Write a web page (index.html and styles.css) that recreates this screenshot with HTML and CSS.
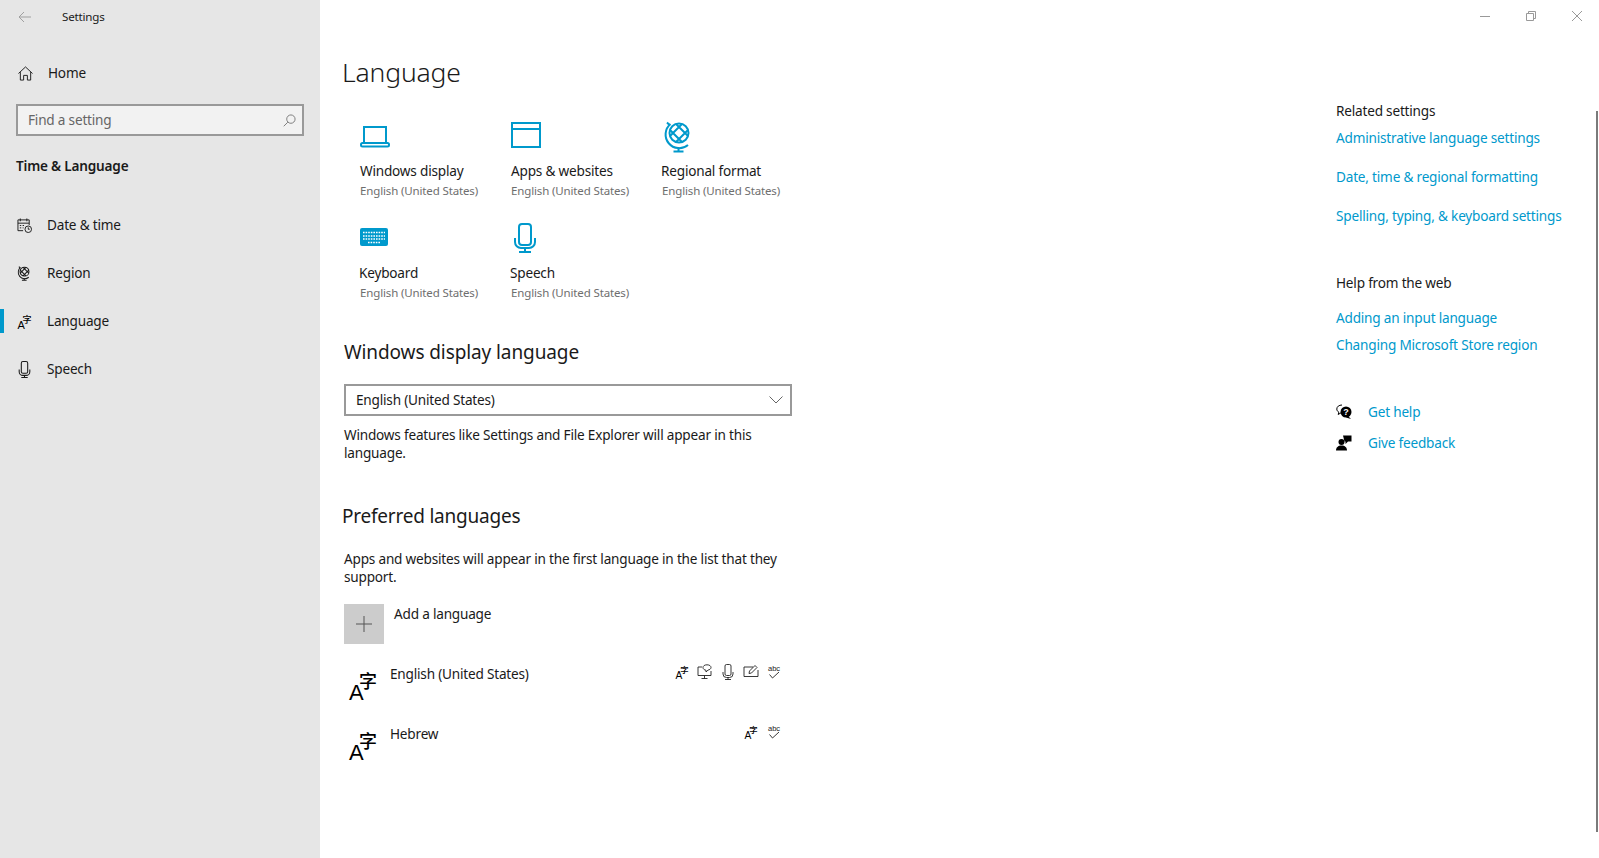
FILE: index.html
```html
<!DOCTYPE html>
<html lang="en">
<head>
<meta charset="utf-8">
<title>Settings</title>
<link rel="stylesheet" href="styles.css">
</head>
<body>
<svg class="sprite" width="0" height="0" aria-hidden="true">
  <defs>
    <symbol id="i-lang" viewBox="0 0 30 30">
      <text class="lang-a" x="1" y="30">A</text>
      <text class="lang-z" x="11" y="17.500">字</text>
    </symbol>
    <symbol id="i-mic" viewBox="0 0 16 16">
      <rect x="5" y="0.500" width="6" height="11" rx="1.500"/>
      <path d="M3 8v2a3.500 3.500 0 0 0 3.500 3.500h3a3.500 3.500 0 0 0 3.500-3.500V8M8 13.500V15.500M5 15.500h6"/>
    </symbol>
    <symbol id="i-abc" viewBox="0 0 16 16">
      <text class="abc" x="2" y="6.500">abc</text>
      <path d="M3.500 10.500l3 3.500 6.500-6"/>
    </symbol>
    <symbol id="i-globe" viewBox="0 0 30 32">
      <path d="M3 1.500L6 4.500M6.500 3A13 13 0 0 0 24 24"/>
      <circle cx="15" cy="12" r="9.500"/>
      <path d="M6 15L18 3M12 21L24 9M6 9L18 21M12 3L24 15"/>
      <path d="M14.500 26v4M9.500 30.500h10"/>
    </symbol>
  </defs>
</svg>

<nav class="sidebar">
  <div class="titlebar">
    <svg class="back" viewBox="0 0 14 12"><path d="M13 6H1M6 1L1 6l5 5"/></svg>
    <span class="app-name">Settings</span>
  </div>
  <a class="home">
    <svg class="nav-icon" viewBox="0 0 16 16"><path d="M0.500 8L8 1l7.500 7M2.500 6.500V15H6V10h4v5h3.500V6.500"/></svg>
    <span>Home</span>
  </a>
  <div class="search">
    <span>Find a setting</span>
    <svg class="search-icon" viewBox="0 0 14 14"><circle cx="8.500" cy="5.500" r="4.500"/><path d="M5.200 8.800L0.800 13.200"/></svg>
  </div>
  <div class="group">Time &amp; Language</div>
  <ul class="nav">
    <li>
      <svg class="nav-icon" viewBox="0 0 16 16"><path d="M6.500 13.500H1V2h12v5.500M1 5.500h12M3.500 0.500v3M10.500 0.500v3M3 8h1.500M6 8h1.500M3 10.500h1.500M6 10.500h1"/><circle cx="12" cy="12" r="3.500"/><path d="M12 10v2h1.500"/></svg>
      <span>Date &amp; time</span>
    </li>
    <li>
      <svg class="nav-icon nav-globe" viewBox="0 0 30 32"><use href="#i-globe"/></svg>
      <span>Region</span>
    </li>
    <li class="active">
      <svg class="nav-icon" viewBox="0 0 30 30"><use href="#i-lang"/></svg>
      <span>Language</span>
    </li>
    <li>
      <svg class="nav-icon nav-mic" viewBox="0 0 16 16"><use href="#i-mic"/></svg>
      <span>Speech</span>
    </li>
  </ul>
</nav>

<main class="content">
  <h1>Language</h1>
  <div class="cards">
    <div class="card">
      <div class="card-icon"><svg class="ic-laptop" viewBox="0 0 30 22"><path d="M4 16V1h22v15M1 18.500c0-1 .5-1.500 1.500-1.500h25c1 0 1.500.5 1.500 1.500v.5c0 1-.5 1.500-1.500 1.500h-25c-1 0-1.500-.5-1.500-1.500z"/></svg></div>
      <div class="card-title">Windows display</div>
      <div class="card-sub">English (United States)</div>
    </div>
    <div class="card">
      <div class="card-icon"><svg class="ic-apps" viewBox="0 0 30 26"><path d="M1 1h28v24H1zM1 7h28"/></svg></div>
      <div class="card-title">Apps &amp; websites</div>
      <div class="card-sub">English (United States)</div>
    </div>
    <div class="card">
      <div class="card-icon"><svg class="ic-globe" viewBox="0 0 30 32"><use href="#i-globe"/></svg></div>
      <div class="card-title nudge">Regional format</div>
      <div class="card-sub">English (United States)</div>
    </div>
    <div class="card">
      <div class="card-icon"><svg class="ic-keyboard" viewBox="0 0 28 18"><rect width="28" height="18" rx="2"/><path class="keys" d="M3 4.500h22M3 8h22M3 11h22M8 14.500h12"/></svg></div>
      <div class="card-title nudge">Keyboard</div>
      <div class="card-sub">English (United States)</div>
    </div>
    <div class="card">
      <div class="card-icon"><svg class="ic-mic" viewBox="0 0 22 30"><rect x="5" y="1" width="12" height="21" rx="3"/><path d="M1 15v4a6 6 0 0 0 6 6h8a6 6 0 0 0 6-6v-4M11 25v4M5 29h12"/></svg></div>
      <div class="card-title nudge">Speech</div>
      <div class="card-sub">English (United States)</div>
    </div>
  </div>

  <h2>Windows display language</h2>
  <div class="select">
    <span>English (United States)</span>
    <svg class="chevron" viewBox="0 0 14 8"><path d="M0.500 0.500L7 7l6.500-6.500"/></svg>
  </div>
  <p class="note">Windows features like Settings and File Explorer will appear in this language.</p>

  <h2 class="h2-pref">Preferred languages</h2>
  <p class="note note-pref">Apps and websites will appear in the first language in the list that they support.</p>

  <div class="add">
    <div class="add-btn"><svg viewBox="0 0 16 16"><path d="M8 0v16M0 8h16"/></svg></div>
    <span>Add a language</span>
  </div>

  <div class="lang-row">
    <svg class="lang-icon" viewBox="0 0 30 30"><use href="#i-lang"/></svg>
    <span class="lang-name">English (United States)</span>
    <div class="caps">
      <svg class="cap-lang" viewBox="0 0 30 30"><use href="#i-lang"/></svg>
      <svg viewBox="0 0 16 16"><path d="M5 3H1v8.500h13V7M4.500 14.500h6M7.500 11.500v3"/><path d="M10 0.800c-2.500 0-4 1.200-4 2.700s1.500 2.700 3 2.700V8l2-1.900c1.500-.3 3-1.200 3-2.600 0-1.500-1.500-2.700-4-2.700z"/></svg>
      <svg viewBox="0 0 16 16"><use href="#i-mic"/></svg>
      <svg viewBox="0 0 16 16"><path d="M10 3H1v9.500h14V6M6 9.500l.5-2.500L12 1.500l2 2L8.500 9z"/></svg>
      <svg viewBox="0 0 16 16"><use href="#i-abc"/></svg>
    </div>
  </div>
  <div class="lang-row">
    <svg class="lang-icon" viewBox="0 0 30 30"><use href="#i-lang"/></svg>
    <span class="lang-name">Hebrew</span>
    <div class="caps">
      <svg class="cap-lang" viewBox="0 0 30 30"><use href="#i-lang"/></svg>
      <svg viewBox="0 0 16 16"><use href="#i-abc"/></svg>
    </div>
  </div>
</main>

<aside class="related">
  <div class="window-controls">
    <svg viewBox="0 0 10 10"><path d="M0 5.500h10"/></svg>
    <svg viewBox="0 0 10 10"><path d="M0.500 2.500h7v7h-7zM2.500 2.500V0.500h7v7h-2"/></svg>
    <svg viewBox="0 0 10 10"><path d="M0 0l10 10M10 0L0 10"/></svg>
  </div>
  <h3>Related settings</h3>
  <a class="link l1">Administrative language settings</a>
  <a class="link l2">Date, time &amp; regional formatting</a>
  <a class="link l2">Spelling, typing, &amp; keyboard settings</a>
  <h3 class="rel-second">Help from the web</h3>
  <a class="link l3">Adding an input language</a>
  <a class="link l4">Changing Microsoft Store region</a>
  <div class="help-row help-first">
    <svg viewBox="0 0 16 16"><path d="M6 1C3 1 .8 2.700.8 5c0 1.400.8 2.500 2 3.200L2.200 10.500l2.800-1.700"/><circle class="solid" cx="10" cy="8" r="5.500"/><path class="solid" d="M12 12l3 3-5-1.500z"/><text class="qmark" x="10" y="10.800">?</text></svg>
    <a class="link">Get help</a>
  </div>
  <div class="help-row help-second">
    <svg viewBox="0 0 16 16"><circle class="solid" cx="5.500" cy="7" r="3"/><path class="solid" d="M0 15.500c0-3 2-5 5.500-5s5.500 2 5.500 5z"/><path class="solid" d="M7 0.500h8.500v6H12L9.500 9V6.500H8.500z"/></svg>
    <a class="link">Give feedback</a>
  </div>
</aside>

<div class="scrollbar"></div>
</body>
</html>
```
FILE: styles.css
```css
* { box-sizing: border-box; }
html, body { margin: 0; height: 100%; }
body {
  display: flex;
  position: relative;
  height: 858px;
  overflow: hidden;
  background: #fff;
  color: #1a1a1a;
  font: 13.6px/20px "Noto Sans", "Noto Sans CJK SC", sans-serif;
  letter-spacing: -0.2px;
}
.sprite { position: absolute; }
svg { display: block; fill: none; stroke: currentColor; stroke-width: 1; flex: none; }
h1, h2, h3, p, ul { margin: 0; padding: 0; font-weight: 400; }
ul { list-style: none; }

/* sidebar */
.sidebar { width: 320px; flex: none; background: #e6e6e6; }
.titlebar { height: 33px; display: flex; align-items: center; padding-left: 18px; }
.back { width: 14px; height: 12px; color: #a0a0a0; }
.app-name { margin-left: 30px; font-size: 11.600px; }
.home { height: 24px; margin-top: 28px; display: flex; align-items: center; padding-left: 18px; gap: 15px; }
.nav-icon { width: 15px; height: 15px; }
.search {
  margin: 19px 16px 0;
  height: 32px;
  border: 2px solid #999;
  background: #f2f2f2;
  color: #666;
  display: flex;
  align-items: center;
  justify-content: space-between;
  padding: 0 6px 0 10px;
}
.search-icon { width: 13px; height: 13px; color: #777; }
.group { margin: 20px 0 0 16px; font-weight: 600; line-height: 20px; }
.nav { margin-top: 25px; }
.nav li { height: 48px; display: flex; align-items: center; padding-left: 17px; gap: 15px; position: relative; }
.nav li.active::before { content: ""; position: absolute; left: 0; top: 12px; width: 4px; height: 24px; background: #0099cc; }
.nav-globe { stroke-width: 2.200; }
.nav-mic { width: 17px; height: 17px; margin-left: -1px; margin-right: -1px; }

/* main */
.content { width: 472px; flex: none; padding: 52px 0 0 24px; }
h1 { font-size: 26.500px; line-height: 40px; font-weight: 300; margin-left: -2px; letter-spacing: -0.15px; }
.cards { display: grid; grid-template-columns: repeat(3, 151px); row-gap: 22px; margin: 29px 0 0 16px; }
.card-icon { height: 32px; color: #0099cc; display: flex; align-items: flex-start; }
.card-icon svg { stroke-width: 2; }
.card-title { margin-top: 8px; }
.nudge { margin-left: -1px; }
.card-sub { font-size: 11.500px; color: #6e6e6e; letter-spacing: -0.14px; }
.ic-laptop { width: 30px; height: 22px; margin-top: 5px; }
.ic-apps { width: 30px; height: 26px; margin-top: 1px; }
.ic-globe { width: 30px; height: 32px; margin-left: 2px; }
.ic-keyboard { width: 28px; height: 18px; margin-top: 5px; }
.ic-keyboard rect { fill: #0099cc; stroke: none; }
.ic-keyboard .keys { stroke: #fff; stroke-width: 1.500; stroke-dasharray: 1.600 1; }
.ic-mic { width: 22px; height: 30px; margin-left: 3px; }
h2 { font-size: 19px; line-height: 28px; margin-top: 35px; letter-spacing: -0.1px; }
.select {
  width: 448px;
  height: 32px;
  margin-top: 18px;
  border: 2px solid #999;
  display: flex;
  align-items: center;
  justify-content: space-between;
  padding: 0 7px 0 10px;
}
.chevron { width: 14px; height: 8px; color: #666; }
.note { width: 448px; line-height: 18px; margin-top: 10px; }
.h2-pref { margin: 40px 0 0 -2px; letter-spacing: -0.22px; }
.note-pref { margin-top: 20px; }
.add { display: flex; margin-top: 18px; gap: 10px; }
.add-btn { width: 40px; height: 40px; background: #ccc; display: flex; align-items: center; justify-content: center; color: #555; }
.add-btn svg { width: 16px; height: 16px; }
.lang-row { display: flex; width: 448px; height: 60px; padding-right: 10px; }
.add + .lang-row { margin-top: 20px; }
.lang-icon { width: 30px; height: 30px; margin: 6px 12px 0 4px; }
.lang-name { flex: 1; }
.caps { display: flex; gap: 7px; height: 16px; }
.caps svg { width: 16px; height: 16px; color: #222; stroke-width: .9; }
.caps .cap-lang { width: 14px; height: 14px; margin: 1px 1px 0 1px; }
.lang-a { font: 400 22px "Liberation Sans", sans-serif; fill: #000; stroke: none; letter-spacing: 0; }
.lang-z { font: 500 18px "Noto Sans CJK SC", sans-serif; fill: #000; stroke: none; letter-spacing: 0; }
.abc { font: 7.500px "Liberation Sans", sans-serif; fill: #222; stroke: none; letter-spacing: 0; }

/* related */
.related { flex: 1; margin-left: 200px; position: relative; padding-top: 101px; padding-left: 344px; white-space: nowrap; }
.window-controls { position: absolute; top: 11px; right: 17px; display: flex; gap: 36px; color: #999; }
.window-controls svg { width: 10px; height: 10px; }
h3 { font-size: 13.600px; }
.link { display: block; color: #0099cc; }
.l1 { margin-top: 7px; }
.l2 { margin-top: 19px; }
.rel-second { margin-top: 47px; }
.l3 { margin-top: 15px; }
.l4 { margin-top: 7px; }
.help-row { display: flex; align-items: center; gap: 16px; height: 20px; }
.help-row svg { width: 16px; height: 16px; color: #000; }
.help-first { margin-top: 47px; }
.help-second { margin-top: 11px; }
.solid { fill: #000; stroke: none; }
.qmark { font: 700 9px "Liberation Sans", sans-serif; fill: #fff; stroke: none; text-anchor: middle; letter-spacing: 0; }

.scrollbar { position: absolute; right: 1px; top: 111px; width: 2px; height: 721px; background: #7a7a7a; }
```
